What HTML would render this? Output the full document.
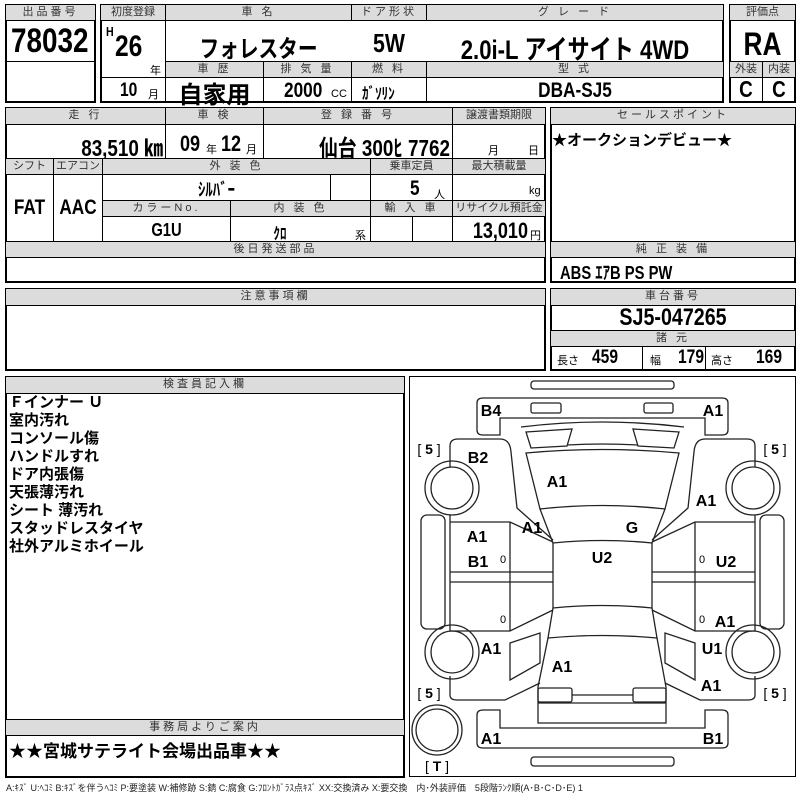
<!DOCTYPE html>
<html><head><meta charset="utf-8">
<style>
body{margin:0;width:800px;height:800px;background:#fff;position:relative;overflow:hidden;font-family:"Liberation Sans","Noto Sans CJK JP",sans-serif;color:#000}
.b{position:absolute;border:2px solid #000;box-sizing:border-box}
.h{position:absolute;background:#dcdcdc;border:1px solid #000;box-sizing:border-box;font-size:11px;color:#333;text-align:center;letter-spacing:3px;line-height:15px;white-space:nowrap;overflow:hidden}
.v{position:absolute;border:1px solid #000;box-sizing:border-box;white-space:nowrap;overflow:hidden}
.t{position:absolute;white-space:nowrap;font-weight:bold;font-family:"Liberation Sans","Noto Sans CJK JP",sans-serif;transform:scaleX(.82);transform-origin:left center}
.c{text-align:center;transform-origin:center center}
.r{text-align:right;transform-origin:right center}
.s{font-size:11px;font-weight:normal}
.n{transform:none}
</style></head><body>

<!-- Box 1 -->
<div class="b" style="left:5px;top:4px;width:91px;height:99px"></div>
<div class="h" style="left:5px;top:4px;width:91px;height:17px">出品番号</div>
<div class="v" style="left:5px;top:20px;width:91px;height:42px"></div>
<div class="t" style="left:11px;top:22px;font-size:34px">78032</div>

<!-- Box 2 -->
<div class="b" style="left:100px;top:4px;width:624px;height:99px"></div>
<div class="h" style="left:100px;top:4px;width:66px;height:17px;letter-spacing:0">初度登録</div>
<div class="h" style="left:165px;top:4px;width:187px;height:17px">車 名</div>
<div class="h" style="left:351px;top:4px;width:76px;height:17px">ドア形状</div>
<div class="h" style="left:426px;top:4px;width:298px;height:17px">グ レ ー ド</div>
<div class="v" style="left:100px;top:20px;width:66px;height:83px"></div>
<div class="v" style="left:100px;top:77px;width:66px;height:26px"></div>
<div class="t" style="left:106px;top:24px;font-size:13px">H</div>
<div class="t" style="left:115px;top:30px;font-size:30px">26</div>
<div class="t s n" style="left:150px;top:62px">年</div>
<div class="t" style="left:120px;top:80px;font-size:19px">10</div>
<div class="t s n" style="left:148px;top:86px">月</div>
<div class="t c" style="left:165px;top:29px;width:187px;font-size:24px">フォレスター</div>
<div class="t c" style="left:351px;top:28px;width:76px;font-size:26px">5W</div>
<div class="t c" style="left:426px;top:28px;width:298px;font-size:27px">2.0i-L アイサイト 4WD</div>
<div class="h" style="left:165px;top:61px;width:99px;height:17px">車 歴</div>
<div class="h" style="left:263px;top:61px;width:89px;height:17px">排 気 量</div>
<div class="h" style="left:351px;top:61px;width:76px;height:17px">燃 料</div>
<div class="h" style="left:426px;top:61px;width:298px;height:17px">型 式</div>
<div class="v" style="left:165px;top:77px;width:99px;height:26px"></div>
<div class="v" style="left:263px;top:77px;width:89px;height:26px"></div>
<div class="v" style="left:351px;top:77px;width:76px;height:26px"></div>
<div class="t c n" style="left:165px;top:75px;width:99px;font-size:24px">自家用</div>
<div class="t" style="left:284px;top:79px;font-size:21px">2000</div>
<div class="t s n" style="left:331px;top:88px">CC</div>
<div class="t" style="left:362px;top:80px;font-size:16px">ｶﾞｿﾘﾝ</div>
<div class="t c" style="left:426px;top:79px;width:298px;font-size:21px">DBA-SJ5</div>

<!-- Box 3 -->
<div class="b" style="left:729px;top:4px;width:67px;height:99px"></div>
<div class="h" style="left:729px;top:4px;width:67px;height:17px;letter-spacing:0">評価点</div>
<div class="t c" style="left:729px;top:26px;width:67px;font-size:32px">RA</div>
<div class="h" style="left:729px;top:61px;width:34px;height:17px;letter-spacing:0">外装</div>
<div class="h" style="left:762px;top:61px;width:34px;height:17px;letter-spacing:0">内装</div>
<div class="v" style="left:762px;top:77px;width:34px;height:26px"></div>
<div class="t c" style="left:729px;top:76px;width:34px;font-size:23px">C</div>
<div class="t c" style="left:762px;top:76px;width:34px;font-size:23px">C</div>

<!-- Middle left box -->
<div class="b" style="left:5px;top:107px;width:541px;height:176px"></div>
<div class="h" style="left:5px;top:107px;width:161px;height:18px">走 行</div>
<div class="h" style="left:165px;top:107px;width:99px;height:18px">車 検</div>
<div class="h" style="left:263px;top:107px;width:190px;height:18px">登 録 番 号</div>
<div class="h" style="left:452px;top:107px;width:94px;height:18px;letter-spacing:0">譲渡書類期限</div>
<div class="v" style="left:5px;top:124px;width:161px;height:35px"></div>
<div class="v" style="left:165px;top:124px;width:99px;height:35px"></div>
<div class="v" style="left:263px;top:124px;width:190px;height:35px"></div>
<div class="v" style="left:452px;top:124px;width:94px;height:35px"></div>
<div class="t r" style="left:20px;top:129px;width:143px;font-size:23px">83,510 ㎞</div>
<div class="t" style="left:180px;top:131px;font-size:22px">09</div>
<div class="t s n" style="left:206px;top:141px">年</div>
<div class="t" style="left:221px;top:131px;font-size:22px">12</div>
<div class="t s n" style="left:246px;top:141px">月</div>
<div class="t r" style="left:280px;top:129px;width:170px;font-size:23px">仙台 300ﾋ 7762</div>
<div class="t s n" style="left:488px;top:142px">月</div>
<div class="t s n" style="left:528px;top:142px">日</div>

<div class="h" style="left:5px;top:158px;width:49px;height:17px;letter-spacing:0">シフト</div>
<div class="h" style="left:53px;top:158px;width:50px;height:17px;letter-spacing:0">エアコン</div>
<div class="h" style="left:102px;top:158px;width:269px;height:17px">外 装 色</div>
<div class="h" style="left:370px;top:158px;width:83px;height:17px;letter-spacing:0">乗車定員</div>
<div class="h" style="left:452px;top:158px;width:94px;height:17px;letter-spacing:0">最大積載量</div>
<div class="v" style="left:5px;top:174px;width:49px;height:68px"></div>
<div class="v" style="left:53px;top:174px;width:50px;height:68px"></div>
<div class="v" style="left:102px;top:174px;width:229px;height:27px"></div>
<div class="v" style="left:330px;top:174px;width:41px;height:27px"></div>
<div class="v" style="left:370px;top:174px;width:83px;height:27px"></div>
<div class="v" style="left:452px;top:174px;width:94px;height:27px"></div>
<div class="t c" style="left:5px;top:196px;width:49px;font-size:21px">FAT</div>
<div class="t c" style="left:53px;top:196px;width:50px;font-size:21px">AAC</div>
<div class="t c" style="left:102px;top:176px;width:229px;font-size:18px">ｼﾙﾊﾞｰ</div>
<div class="t" style="left:410px;top:177px;font-size:21px">5</div>
<div class="t s n" style="left:434px;top:186px">人</div>
<div class="t s n" style="left:529px;top:185px">kg</div>
<div class="h" style="left:102px;top:200px;width:129px;height:17px">カラーNo.</div>
<div class="h" style="left:230px;top:200px;width:141px;height:17px">内 装 色</div>
<div class="h" style="left:370px;top:200px;width:83px;height:17px">輸 入 車</div>
<div class="h" style="left:452px;top:200px;width:94px;height:17px;letter-spacing:0">リサイクル預託金</div>
<div class="v" style="left:102px;top:216px;width:129px;height:26px"></div>
<div class="v" style="left:230px;top:216px;width:141px;height:26px"></div>
<div class="v" style="left:370px;top:216px;width:43px;height:26px"></div>
<div class="v" style="left:412px;top:216px;width:41px;height:26px"></div>
<div class="t c" style="left:102px;top:220px;width:129px;font-size:18px">G1U</div>
<div class="t c" style="left:230px;top:220px;width:100px;font-size:16px">ｸﾛ</div>
<div class="t s n" style="left:355px;top:227px">系</div>
<div class="t r" style="left:440px;top:218px;width:88px;font-size:22px">13,010</div>
<div class="t s n" style="left:530px;top:227px">円</div>
<div class="h" style="left:5px;top:241px;width:541px;height:17px">後日発送部品</div>

<!-- Sales point -->
<div class="b" style="left:550px;top:107px;width:246px;height:176px"></div>
<div class="h" style="left:550px;top:107px;width:246px;height:18px">セールスポイント</div>
<div class="t n" style="left:552px;top:129px;font-size:15px">★オークションデビュー★</div>
<div class="h" style="left:550px;top:241px;width:246px;height:17px">純 正 装 備</div>
<div class="t" style="left:560px;top:259px;font-size:18px">ABS ｴｱB PS PW</div>

<!-- Caution -->
<div class="b" style="left:5px;top:288px;width:541px;height:83px"></div>
<div class="h" style="left:5px;top:288px;width:541px;height:18px">注意事項欄</div>

<!-- Chassis -->
<div class="b" style="left:550px;top:288px;width:246px;height:83px"></div>
<div class="h" style="left:550px;top:288px;width:246px;height:18px">車台番号</div>
<div class="t c" style="left:550px;top:304px;width:246px;font-size:24px">SJ5-047265</div>
<div class="h" style="left:550px;top:330px;width:246px;height:17px">諸 元</div>
<div class="v" style="left:642px;top:346px;width:64px;height:25px"></div>
<div class="t s n" style="left:557px;top:352px">長さ</div>
<div class="t" style="left:592px;top:347px;font-size:19px">459</div>
<div class="t s n" style="left:650px;top:352px">幅</div>
<div class="t" style="left:678px;top:347px;font-size:19px">179</div>
<div class="t s n" style="left:711px;top:352px">高さ</div>
<div class="t" style="left:756px;top:347px;font-size:19px">169</div>

<!-- Inspector -->
<div class="b" style="left:5px;top:376px;width:400px;height:402px"></div>
<div class="h" style="left:5px;top:376px;width:400px;height:18px">検査員記入欄</div>
<div style="position:absolute;left:9px;top:394px;font-size:15px;line-height:18px;font-weight:bold">
Ｆインナー Ｕ<br>室内汚れ<br>コンソール傷<br>ハンドルすれ<br>ドア内張傷<br>天張薄汚れ<br>シート 薄汚れ<br>スタッドレスタイヤ<br>社外アルミホイール</div>
<div class="h" style="left:5px;top:719px;width:400px;height:17px">事務局よりご案内</div>
<div class="t n" style="left:9px;top:737px;font-size:17px">★★宮城サテライト会場出品車★★</div>

<!-- Diagram -->
<div class="b" style="left:409px;top:376px;width:387px;height:401px;border-width:1.5px"></div>
<svg style="position:absolute;left:0;top:0" width="800" height="800" viewBox="0 0 800 800">
<g fill="none" stroke="#222" stroke-width="1.3">
<rect x="531" y="381" width="143" height="8" rx="3"/>
<rect x="531" y="757" width="143" height="9" rx="3"/>
<path d="M477,430 L477,403 Q477,398 483,398 L722,398 Q728,398 728,403 L728,430 Q728,435 722,435 L705,435 L705,418 L500,418 L500,435 L483,435 Q477,435 477,430 Z"/>
<rect x="531" y="403" width="30" height="10" rx="2"/>
<rect x="644" y="403" width="29" height="10" rx="2"/>
<path d="M477,715 Q477,710 483,710 L500,710 L500,728 L705,728 L705,710 L722,710 Q728,710 728,715 L728,743 Q728,748 722,748 L483,748 Q477,748 477,743 Z"/>
<path d="M521,427 Q602,417 684,427"/>
<path d="M526,432 L572,429 L567,446 L531,448 Z"/>
<path d="M679,432 L633,429 L638,446 L674,448 Z"/>
<path d="M567,445 Q602,443 638,445"/>
<path d="M526,453 Q602,446 679,453 L665,509 Q602,502 540,509 Z"/>
<path d="M540,509 L553,543 Q602,538 652,543 L665,509"/>
<path d="M553,543 L553,608 Q602,603 652,608 L652,543"/>
<path d="M553,608 L548,638 Q602,633 657,638 L652,608"/>
<path d="M548,638 L538,687 L538,723 L666,723 L666,687 L657,638"/>
<rect x="538" y="688" width="34" height="14" rx="2"/>
<rect x="633" y="688" width="33" height="14" rx="2"/>
<path d="M572,695 L633,695 M538,703 L666,703"/>
<g id="L">
<path d="M450,467 L450,446 Q450,439 458,439 L500,439 Q510,439 511,452 L517,508 L553,540"/>
<circle cx="452" cy="488" r="27"/><circle cx="452" cy="488" r="21"/>
<circle cx="452" cy="652" r="27"/><circle cx="452" cy="652" r="21"/>
<rect x="421" y="515" width="24" height="114" rx="6"/>
<path d="M450,515 L450,631 M450,522 L510,522 L553,542 M510,522 L510,631 M450,572 L553,572 M450,582 L553,582 M450,631 L510,631 L553,610"/>
<path d="M510,643 L540,633 L540,663 L510,680 Z"/>
<path d="M450,676 L450,695 Q450,700 457,700 L505,700 L540,683"/>
</g>
<use href="#L" transform="matrix(-1,0,0,1,1205,0)"/>
<circle cx="437" cy="730" r="25"/><circle cx="437" cy="730" r="21"/>
</g>
<g font-family="Liberation Sans, sans-serif" font-weight="bold" font-size="16" text-anchor="middle" fill="#000">
<text x="491" y="416">B4</text><text x="713" y="416">A1</text>
<text x="478" y="463">B2</text><text x="557" y="487">A1</text>
<text x="706" y="506">A1</text><text x="532" y="533">A1</text>
<text x="632" y="533">G</text><text x="477" y="542">A1</text>
<text x="478" y="567">B1</text><text x="602" y="563">U2</text>
<text x="726" y="567">U2</text><text x="725" y="627">A1</text>
<text x="491" y="654">A1</text><text x="712" y="654">U1</text>
<text x="562" y="672">A1</text><text x="711" y="691">A1</text>
<text x="491" y="744">A1</text><text x="713" y="744">B1</text>
</g>
<g font-family="Liberation Sans, sans-serif" font-size="14" text-anchor="middle" fill="#000">
<text x="429" y="454">[ <tspan font-weight="bold">5</tspan> ]</text>
<text x="775" y="454">[ <tspan font-weight="bold">5</tspan> ]</text>
<text x="429" y="698">[ <tspan font-weight="bold">5</tspan> ]</text>
<text x="775" y="698">[ <tspan font-weight="bold">5</tspan> ]</text>
<text x="437" y="771">[ <tspan font-weight="bold">T</tspan> ]</text>
<text x="503" y="563" font-size="11">0</text><text x="503" y="623" font-size="11">0</text>
<text x="702" y="563" font-size="11">0</text><text x="702" y="623" font-size="11">0</text>
</g>
</svg>

<div style="position:absolute;left:6px;top:781px;font-size:9px;color:#222;white-space:nowrap">A:ｷｽﾞ U:ﾍｺﾐ B:ｷｽﾞを伴うﾍｺﾐ P:要塗装 W:補修跡 S:錆 C:腐食 G:ﾌﾛﾝﾄｶﾞﾗｽ点ｷｽﾞ XX:交換済み X:要交換　内･外装評価　5段階ﾗﾝｸ順(A･B･C･D･E) 1</div>
</body></html>
